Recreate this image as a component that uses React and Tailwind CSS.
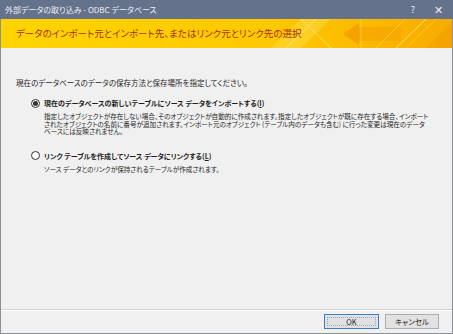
import React from 'react';

const jp = "font-['Noto_Sans_CJK_JP','Noto_Sans',sans-serif] [font-feature-settings:'palt']";

function Radio({ checked }) {
  return (
    <span className="w-[9px] h-[9px] rounded-full border border-[#333] bg-white flex items-center justify-center shrink-0">
      {checked && <span className="w-[5px] h-[5px] rounded-full bg-[#333]" />}
    </span>
  );
}

function BannerArt() {
  // decorative stripes + arrow on the right side of the yellow header
  return (
    <svg className="absolute inset-0" width="453" height="29" viewBox="0 0 453 29">
      <defs>
        <linearGradient id="bg" x1="0" x2="1" y1="0" y2="0">
          <stop offset="0" stopColor="#ffd400" />
          <stop offset="0.6" stopColor="#ffc800" />
          <stop offset="1" stopColor="#f7ab00" />
        </linearGradient>
      </defs>
      <rect width="453" height="29" fill="url(#bg)" />
      <polygon points="270,29 300,0 330,0 300,29" fill="#ffde4d" opacity="0.45" />
      <line x1="285" y1="29" x2="315" y2="0" stroke="#fff3b0" strokeWidth="0.8" opacity="0.8" />
      <line x1="300" y1="0" x2="330" y2="29" stroke="#fff3b0" strokeWidth="0.8" opacity="0.7" />
      <polygon points="342,15 358,4 358,26" fill="#f5a300" />
      <rect x="358" y="8" width="42" height="14" fill="#f6a800" opacity="0.8" />
      <line x1="360" y1="0" x2="360" y2="29" stroke="#ffe070" strokeWidth="0.8" opacity="0.7" />
      <line x1="395" y1="29" x2="425" y2="0" stroke="#ffe98a" strokeWidth="1" opacity="0.8" />
      <line x1="405" y1="29" x2="435" y2="0" stroke="#ffe98a" strokeWidth="0.6" opacity="0.6" />
      <polygon points="425,29 453,2 453,29" fill="#f39c00" opacity="0.6" />
      <line x1="375" y1="29" x2="404" y2="0" stroke="#fff0a0" strokeWidth="0.6" opacity="0.6" />
    </svg>
  );
}

export default function App() {
  return (
    <div className={`w-[453px] h-[334px] flex flex-col bg-[#f0f0f0] ${jp}`}>
      <div className="h-[19px] bg-[#65728c] flex items-center pl-[5px] text-[#eef0f4] text-[8px] leading-none">
        <span className="flex-1">外部データの取り込み - ODBC データベース</span>
        <span className="w-[20px] text-center text-[9px]">?</span>
        <span className="w-[30px] text-center text-[11px] font-light">✕</span>
      </div>

      <div className="flex-1 flex flex-col border-x border-b border-[#8d9196]">
        <div className="relative h-[29px] overflow-hidden flex items-center">
          <BannerArt />
          <span className="relative pl-[15px] text-[9.5px] text-[#a3320a] leading-none">
            データのインポート元とインポート先、またはリンク元とリンク先の選択
          </span>
        </div>

        <div className="flex-1 flex flex-col pl-[15px] pt-[30px] text-[#1e1e1e] text-[7.5px]">
          <p className="leading-[10px]">現在のデータベースのデータの保存方法と保存場所を指定してください。</p>

          <div className="mt-[10px] pl-[15px] flex items-center gap-[4px] h-[10px]">
            <Radio checked />
            <span className="font-bold text-[7px] leading-[10px] whitespace-nowrap">現在のデータベースの新しいテーブルにソース データをインポートする(<span className="underline">I</span>)</span>
          </div>
          <p className="mt-[5px] pl-[28px] text-[6.6px] leading-[7.5px] whitespace-nowrap">
            指定したオブジェクトが存在しない場合、そのオブジェクトが自動的に作成されます。指定したオブジェクトが既に存在する場合、インポート<br />
            されたオブジェクトの名前に番号が追加されます。インポート元のオブジェクト (テーブル内のデータも含む) に行った変更は現在のデータ<br />
            ベースには反映されません。
          </p>

          <div className="mt-[15px] pl-[15px] flex items-center gap-[4px] h-[10px]">
            <Radio />
            <span className="font-bold text-[7px] leading-[10px] whitespace-nowrap">リンク テーブルを作成してソース データにリンクする(<span className="underline">L</span>)</span>
          </div>
          <p className="mt-[5px] pl-[28px] text-[6.6px] leading-[7.5px] whitespace-nowrap">ソース データとのリンクが保持されるテーブルが作成されます。</p>
        </div>

        <div className="h-[24px] border-t border-[#d2d2d2] shadow-[inset_0_1px_0_#ffffff] flex items-center justify-end gap-[6px] pr-[13px]">
          <button className="w-[55px] h-[15px] bg-[#e1e1e1] border border-[#3b7fc4] p-[2px] flex text-[7.5px] text-[#1e1e1e] leading-none">
            <span className="flex-1 flex items-center justify-center border border-dotted border-[#9aa6b2]">OK</span>
          </button>
          <button className="w-[54px] h-[15px] bg-[#e1e1e1] border border-[#adadad] flex items-center justify-center text-[7.5px] text-[#1e1e1e] leading-none">
            キャンセル
          </button>
        </div>
      </div>
    </div>
  );
}
